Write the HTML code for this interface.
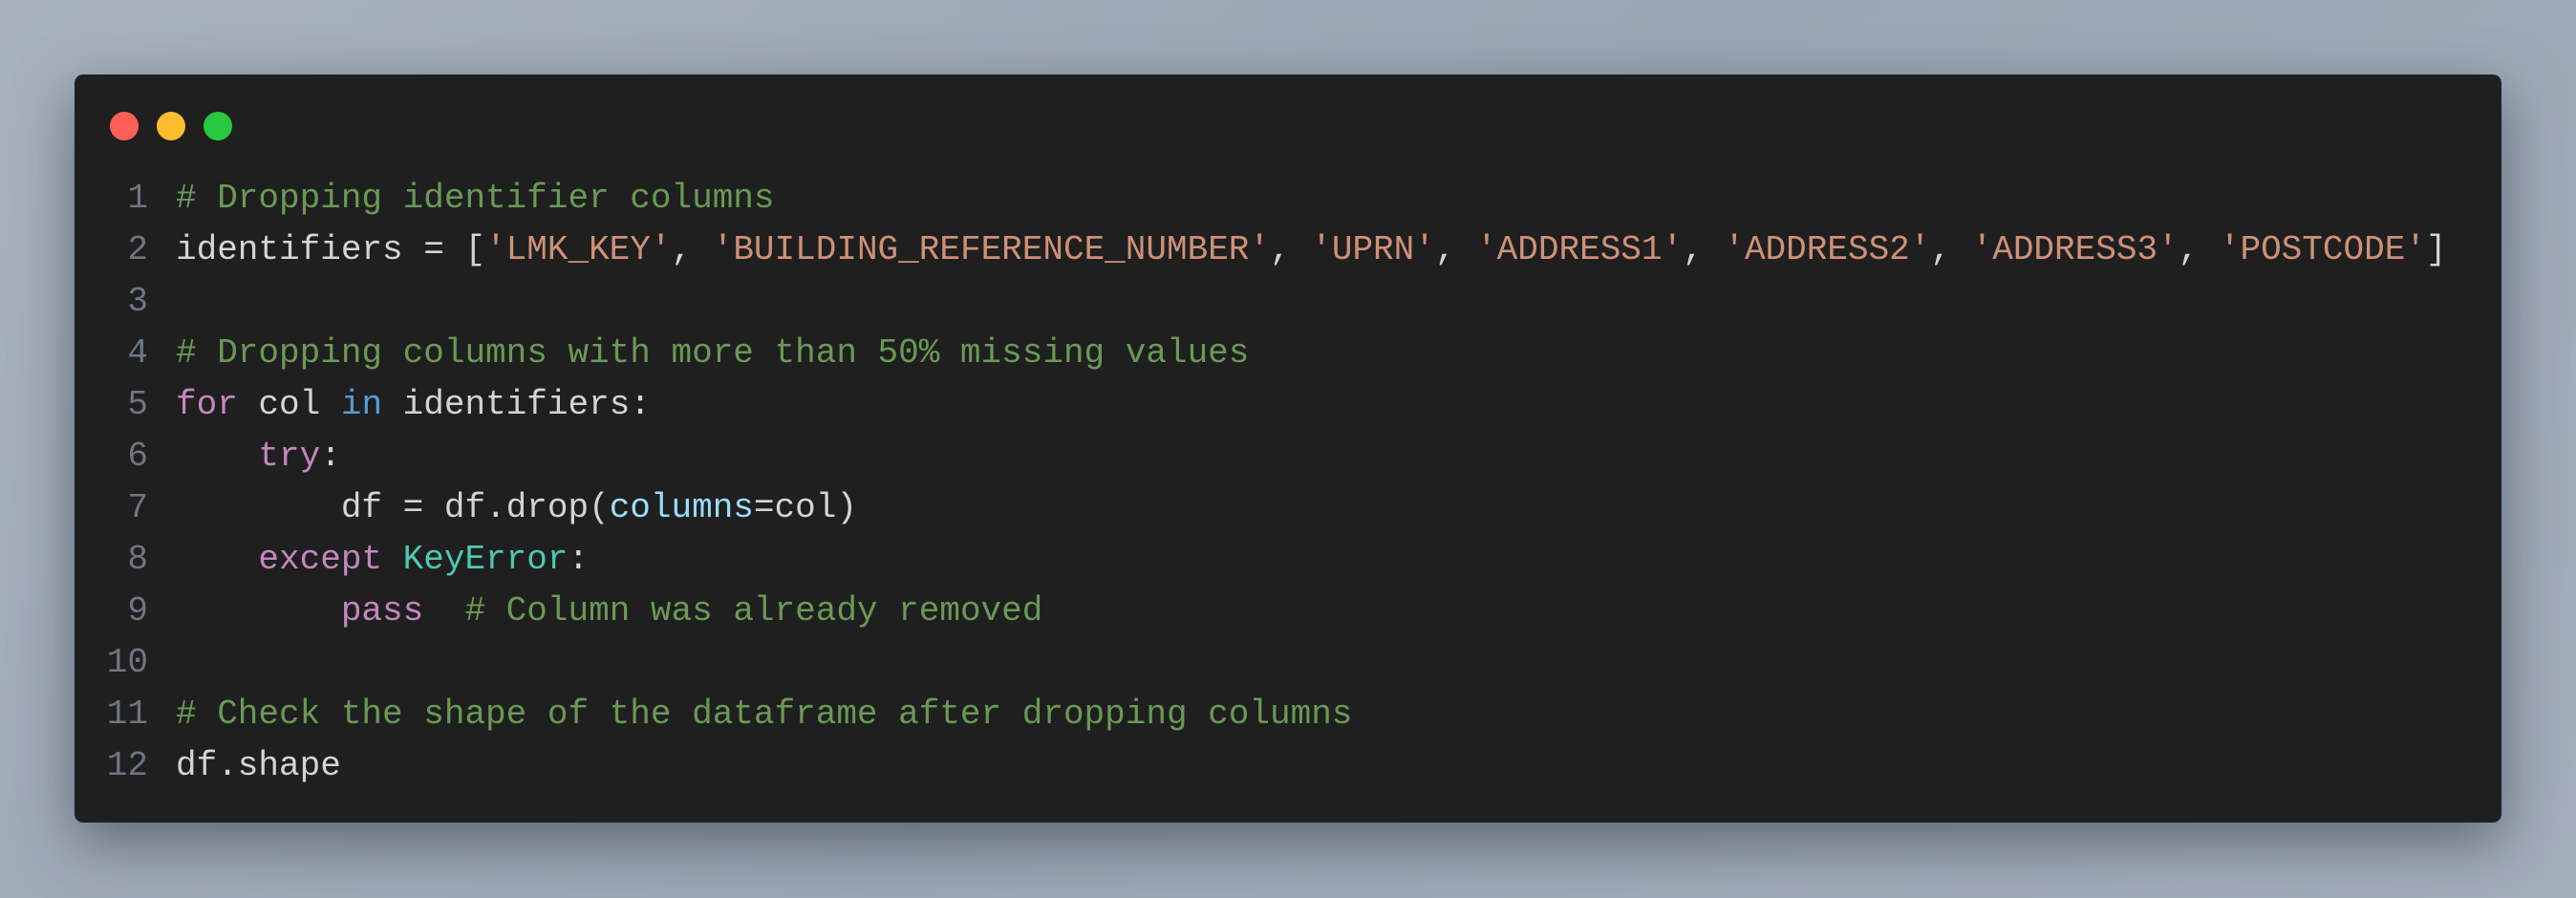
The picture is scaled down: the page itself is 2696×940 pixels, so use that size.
<!DOCTYPE html>
<html><head><meta charset="utf-8"><style>
html,body{margin:0;padding:0;}
body{width:2696px;height:940px;overflow:hidden;background:linear-gradient(135deg,#a7b2be,#9aa6b3 50%,#a3aebb);position:relative;font-family:"Liberation Mono",monospace;}
.win{position:absolute;left:78px;top:78px;width:2540px;height:783px;background:#1f1f1f;border-radius:9px;box-shadow:0 20px 60px rgba(40,50,60,0.55);}
.dot{position:absolute;top:117px;width:30px;height:30px;border-radius:50%;}
.code{position:absolute;left:0;top:181px;font-size:36px;line-height:54px;color:#d4d4d4;white-space:pre;}
.ln{display:inline-block;width:155px;text-align:right;color:#6e7681;}
.gap{display:inline-block;width:29px;}
.c{color:#6a9955}.s{color:#ce9178}.k{color:#c586c0}.b{color:#569cd6}.t{color:#4ec9b0}.p{color:#9cdcfe}
</style></head><body>
<div class="win"></div>
<div class="dot" style="left:115px;background:#ff5f57"></div>
<div class="dot" style="left:164px;background:#febc2e"></div>
<div class="dot" style="left:213px;background:#28c840"></div>
<div class="code"><div><span class="ln">1</span><span class="gap"></span><span class="c"># Dropping identifier columns</span></div><div><span class="ln">2</span><span class="gap"></span>identifiers = [<span class="s">'LMK_KEY'</span>, <span class="s">'BUILDING_REFERENCE_NUMBER'</span>, <span class="s">'UPRN'</span>, <span class="s">'ADDRESS1'</span>, <span class="s">'ADDRESS2'</span>, <span class="s">'ADDRESS3'</span>, <span class="s">'POSTCODE'</span>]</div><div><span class="ln">3</span><span class="gap"></span></div><div><span class="ln">4</span><span class="gap"></span><span class="c"># Dropping columns with more than 50% missing values</span></div><div><span class="ln">5</span><span class="gap"></span><span class="k">for</span> col <span class="b">in</span> identifiers:</div><div><span class="ln">6</span><span class="gap"></span>    <span class="k">try</span>:</div><div><span class="ln">7</span><span class="gap"></span>        df = df.drop(<span class="p">columns</span>=col)</div><div><span class="ln">8</span><span class="gap"></span>    <span class="k">except</span> <span class="t">KeyError</span>:</div><div><span class="ln">9</span><span class="gap"></span>        <span class="k">pass</span>  <span class="c"># Column was already removed</span></div><div><span class="ln">10</span><span class="gap"></span></div><div><span class="ln">11</span><span class="gap"></span><span class="c"># Check the shape of the dataframe after dropping columns</span></div><div><span class="ln">12</span><span class="gap"></span>df.shape</div></div>
</body></html>
